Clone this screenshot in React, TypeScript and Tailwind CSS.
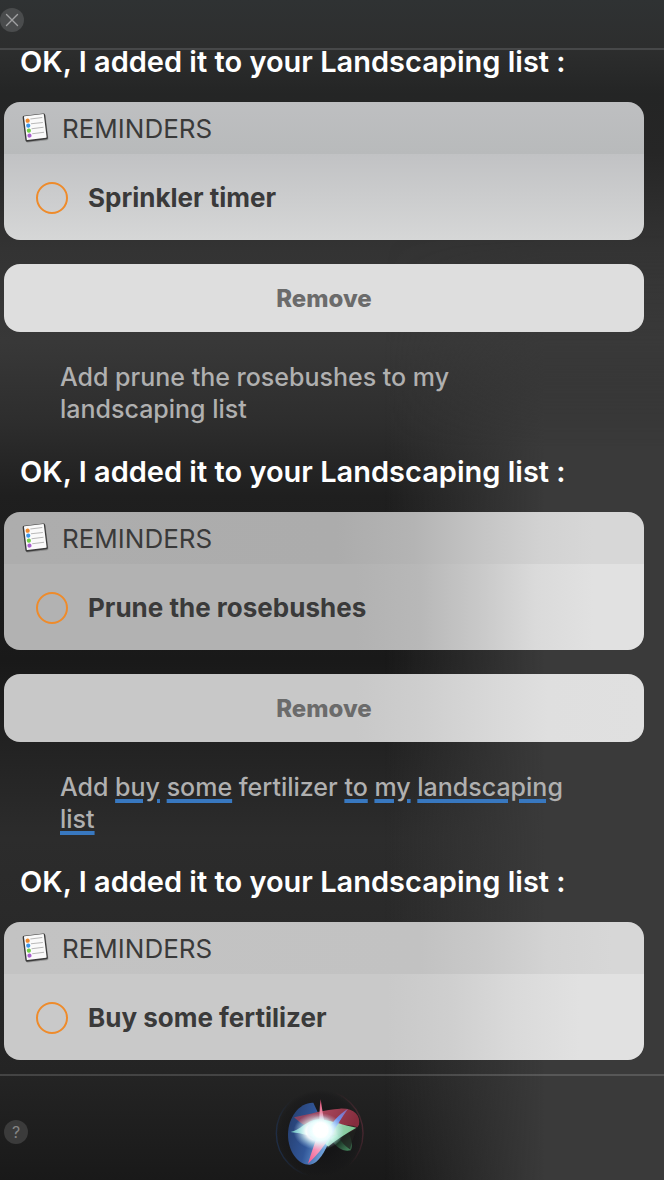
import React from 'react';

type Tone = 'cool' | 'dark' | 'mid';

interface Reminder {
  id: string;
  title: string;
  tone: Tone;
  removable: boolean;
}

const headerTones: Record<Tone, string> = {
  cool: 'bg-linear-to-b from-[#bebfc1] to-[#b8babb]',
  dark: 'bg-[linear-gradient(to_right,#adadad_0%,#acacac_52%,#b4b4b4_64%,#c4c4c4_74%,#d2d2d2_84%,#d7d7d7_92%)]',
  mid: 'bg-[linear-gradient(to_right,#c3c3c3_0%,#c2c2c2_65%,#c9c9c9_75%,#d3d3d3_85%,#d7d7d7_95%)]',
};

const bodyTones: Record<Tone, string> = {
  cool: 'bg-linear-to-b from-[#c1c2c4] to-[#d6d7d7]',
  dark: 'bg-[linear-gradient(to_right,#b2b2b2_0%,#b2b2b2_55%,#b8b8b8_65%,#c8c8c8_74%,#dadada_83%,#e1e1e1_92%)]',
  mid: 'bg-[linear-gradient(to_right,#c9c9c9_0%,#c9c9c9_60%,#cfcfcf_70%,#dadada_80%,#e1e1e1_90%)]',
};

const buttonTones: Record<Tone, string> = {
  cool: 'bg-[#dedede]',
  dark: 'bg-[linear-gradient(to_right,#c8c8c8_0%,#c8c8c8_55%,#cecece_65%,#d7d7d7_75%,#dfdfdf_85%,#e0e0e0_100%)]',
  mid: 'bg-[#dedede]',
};

const NotepadIcon = () => (
  <svg viewBox="1 1 28 32" className="w-7 h-8 shrink-0" aria-hidden="true">
    <g transform="rotate(-7 14 16)">
      <rect x="3.6" y="3.6" width="22.4" height="26" rx="1.6" fill="#555" opacity="0.4" />
      <rect x="3" y="2.6" width="22.6" height="26" rx="1.6" fill="#3b3b3b" />
      <rect x="4.4" y="3" width="20" height="24" rx="0.6" fill="#fafafa" />
      <path d="M10.5 6.4h12M10.5 11.4h12M10.5 16.4h12M10.5 21.4h12" stroke="#b9b9b9" strokeWidth="1" />
      <circle cx="7.6" cy="7.8" r="2.1" fill="#ef8a30" />
      <circle cx="7.6" cy="12.8" r="2.1" fill="#3d96ea" />
      <circle cx="7.6" cy="17.8" r="2.1" fill="#74cf4a" />
      <circle cx="7.6" cy="22.8" r="2.1" fill="#a95fd0" />
    </g>
  </svg>
);

const SiriOrb = () => (
  <svg viewBox="72 54 276 264" className="w-[92px] h-[88px]" aria-hidden="true">
    <defs>
      <radialGradient id="core">
        <stop offset="0" stopColor="#fff" />
        <stop offset="0.5" stopColor="#fff" stopOpacity="0.95" />
        <stop offset="0.72" stopColor="#dff" stopOpacity="0.5" />
        <stop offset="1" stopColor="#bdf" stopOpacity="0" />
      </radialGradient>
      <linearGradient id="ring" x1="0" y1="0.6" x2="1" y2="0.4">
        <stop offset="0" stopColor="#1f3a66" stopOpacity="0.6" />
        <stop offset="0.3" stopColor="#1d2430" stopOpacity="0" />
        <stop offset="0.75" stopColor="#402028" stopOpacity="0" />
        <stop offset="1" stopColor="#6b2f3e" stopOpacity="0.6" />
      </linearGradient>
      <radialGradient id="glass">
        <stop offset="0.5" stopColor="#0e0e10" stopOpacity="0.5" />
        <stop offset="0.9" stopColor="#141416" stopOpacity="0.3" />
        <stop offset="1" stopColor="#141416" stopOpacity="0" />
      </radialGradient>
      <linearGradient id="blue" x1="0" y1="0.3" x2="1" y2="0.7">
        <stop offset="0" stopColor="#263f70" />
        <stop offset="0.5" stopColor="#315698" />
        <stop offset="1" stopColor="#7fb4ea" />
      </linearGradient>
      <linearGradient id="red" x1="0" y1="0" x2="1" y2="0.2">
        <stop offset="0" stopColor="#7d4262" />
        <stop offset="0.45" stopColor="#a8465c" />
        <stop offset="1" stopColor="#852d3d" />
      </linearGradient>
      <linearGradient id="green" x1="0" y1="0" x2="1" y2="0">
        <stop offset="0" stopColor="#7fdcd0" />
        <stop offset="0.5" stopColor="#c8fbe6" />
        <stop offset="1" stopColor="#7fe3a0" />
      </linearGradient>
      <linearGradient id="leaf" x1="0" y1="0" x2="1" y2="1">
        <stop offset="0" stopColor="#8fe8b8" />
        <stop offset="0.5" stopColor="#1c3527" />
        <stop offset="1" stopColor="#4a9465" />
      </linearGradient>
      <linearGradient id="pink" x1="1" y1="0" x2="0" y2="1">
        <stop offset="0" stopColor="#ffe6f2" />
        <stop offset="1" stopColor="#f0578c" />
      </linearGradient>
      <linearGradient id="spike" x1="0" y1="0" x2="0" y2="1">
        <stop offset="0" stopColor="#d8446c" />
        <stop offset="1" stopColor="#ffd8e6" />
      </linearGradient>
      <linearGradient id="violet" x1="0" y1="1" x2="1" y2="0">
        <stop offset="0" stopColor="#b7eaff" />
        <stop offset="0.6" stopColor="#6d8ee8" />
        <stop offset="1" stopColor="#8f63a8" />
      </linearGradient>
    </defs>
    <circle cx="209" cy="190" r="130" fill="url(#glass)" stroke="url(#ring)" strokeWidth="4" />
    <path d="M190 98C150 96 114 140 114 194C114 246 146 286 180 284C206 280 226 244 240 206Z" fill="url(#blue)" />
    <path d="M240 204C262 236 280 246 302 241C308 230 306 200 290 180Z" fill="url(#leaf)" />
    <path d="M132 142C180 132 226 118 270 116C312 114 332 136 327 164C318 186 270 200 236 194C200 184 158 168 132 142Z" fill="url(#red)" />
    <path d="M256 172C288 162 308 166 322 172C314 196 300 226 302 240C282 226 262 206 256 172Z" fill="#20211f" opacity="0.75" />
    <path d="M122 186C150 182 166 152 206 148C240 150 286 168 319 173C290 190 262 206 234 230C222 214 200 196 122 186Z" fill="url(#green)" opacity="0.85" />
    <path d="M212 88C208 112 209 140 207 170L226 168C219 140 216 112 212 88Z" fill="url(#spike)" />
    <path d="M294 116C270 130 248 156 226 184L244 196C258 170 276 142 294 116Z" fill="url(#violet)" />
    <path d="M174 281C182 256 192 224 204 192L240 198C222 230 200 258 174 281Z" fill="url(#pink)" />
    <ellipse cx="206" cy="184" rx="76" ry="56" fill="url(#core)" />
    <circle cx="212" cy="180" r="44" fill="url(#core)" />
  </svg>
);

const Reply = ({ reminder }: { reminder: Reminder }) => (
  <section>
    <h2 className="pl-4 text-[29px] leading-6 font-semibold text-white whitespace-nowrap">
      OK, I added it to your Landscaping list :
    </h2>
    <div className="mt-7 rounded-2xl overflow-hidden text-[#3a3a3a]">
      <div className={`flex items-center gap-3 h-[52px] pt-0.5 pl-[18px] ${headerTones[reminder.tone]}`}>
        <NotepadIcon />
        <span className="text-[26px] leading-8">REMINDERS</span>
      </div>
      <label
        htmlFor={reminder.id}
        className={`flex items-center gap-5 h-[86px] pt-0.5 pl-8 ${bodyTones[reminder.tone]}`}
      >
        <input
          id={reminder.id}
          type="checkbox"
          className="appearance-none size-8 shrink-0 rounded-full border-2 border-[#ee8b2b] checked:bg-[#ee8b2b]"
        />
        <span className="text-[26px] leading-8 font-bold">{reminder.title}</span>
      </label>
    </div>
    {reminder.removable && (
      <button
        type="button"
        className={`mt-6 w-full h-[68px] pt-0.5 rounded-2xl text-[24px] leading-8 font-extrabold text-[#6b6b6b] ${buttonTones[reminder.tone]}`}
      >
        Remove
      </button>
    )}
  </section>
);

const Request = ({ children }: { children: React.ReactNode }) => (
  <p className="mt-[29px] mb-[35px] ml-14 mr-11 text-[25px] leading-8 font-medium text-[#b0b0b0]">{children}</p>
);

const Unsure = ({ children }: { children: React.ReactNode }) => (
  <span className="underline decoration-[#3878c0] decoration-4 underline-offset-3">{children}</span>
);

export default function App() {
  return (
    <div className="relative isolate flex flex-col min-h-screen overflow-hidden font-['Inter',sans-serif] bg-[linear-gradient(to_bottom,#2f3233_0%,#2d2e2e_4%,#242525_8%,#262626_13%,#333333_21%,#383838_29%,#2d2d2d_36%,#1f1f1f_42%,#191919_56%,#222222_63%,#2c2c2c_71%,#2a2a2a_77%,#242424_91%,#191919_100%)]">
      {/* lighter band down the right side */}
      <div className="absolute inset-0 -z-10 bg-linear-to-r from-transparent from-58% to-[#3a3a3a] to-82% mask-[linear-gradient(to_bottom,transparent_20%,black_38%)]" />

      <header className="h-[50px] pt-2 border-b-2 border-[#474849]">
        <button
          type="button"
          aria-label="Close"
          className="flex items-center justify-center size-6 rounded-full bg-[#4a4c4d] text-[#a0a1a2]"
        >
          <svg viewBox="0 0 24 24" className="size-6" fill="none" stroke="currentColor" strokeWidth="1.4" strokeLinecap="round">
            <path d="M6.5 6.5L17.5 17.5M17.5 6.5L6.5 17.5" />
          </svg>
        </button>
      </header>

      <main className="flex-1 pl-1 pr-5 pb-[14px]">
        <Reply reminder={{ id: 'sprinkler', title: 'Sprinkler timer', tone: 'cool', removable: true }} />
        <Request>Add prune the rosebushes to my landscaping list</Request>
        <Reply reminder={{ id: 'rosebushes', title: 'Prune the rosebushes', tone: 'dark', removable: true }} />
        <Request>
          Add <Unsure>buy</Unsure> <Unsure>some</Unsure> fertilizer <Unsure>to</Unsure> <Unsure>my</Unsure>{' '}
          <Unsure>landscaping</Unsure> <Unsure>list</Unsure>
        </Request>
        <Reply reminder={{ id: 'fertilizer', title: 'Buy some fertilizer', tone: 'mid', removable: false }} />
      </main>

      <footer className="grid grid-cols-[24px_1fr_24px] items-center h-[106px] pt-2 pl-1 pr-7 border-t-2 border-white/15">
        <button
          type="button"
          aria-label="Help"
          className="size-6 rounded-full bg-[#3b3b3b] text-base leading-6 text-[#858585]"
        >
          ?
        </button>
        <div className="flex justify-center">
          <SiriOrb />
        </div>
      </footer>
    </div>
  );
}
